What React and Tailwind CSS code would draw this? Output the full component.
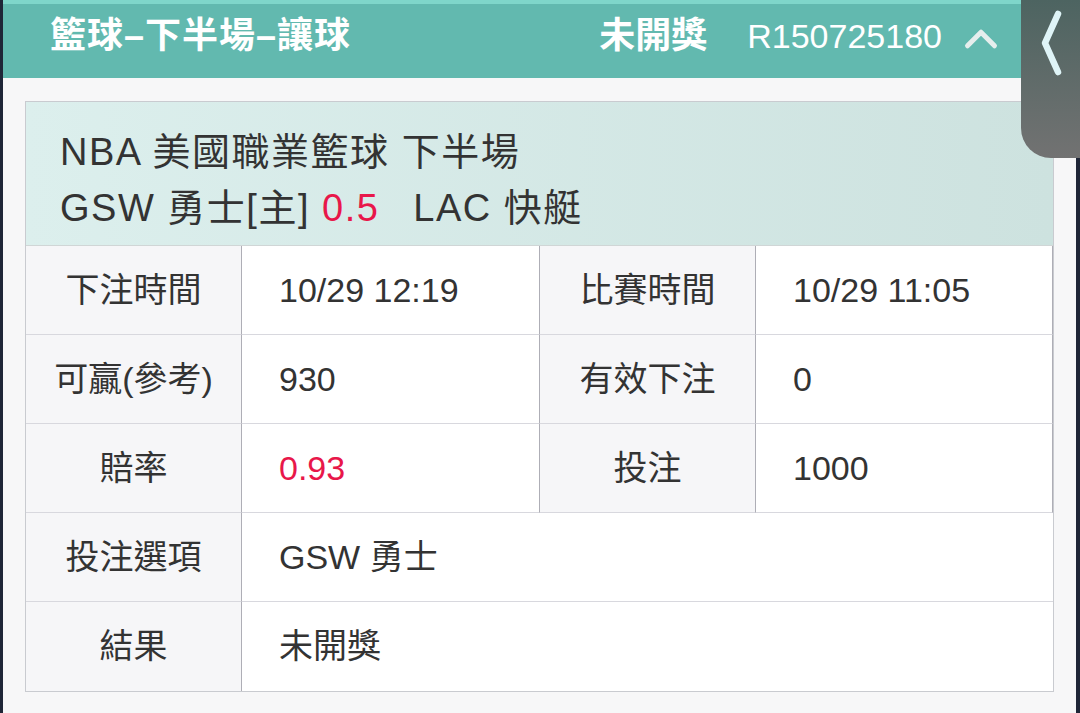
import { ChevronUp } from "lucide-react";

const font = { fontFamily: '"Liberation Sans", "Noto Sans CJK TC", sans-serif' };

function Label({ children }) {
	return (
		<div className="flex items-center justify-center bg-[#f6f6f8] border-r border-[#aeaeb6] text-[34px] text-[#333]">
			{children}
		</div>
	);
}

function Value({ children, red, span }) {
	return (
		<div
			className={`flex items-center pl-[37px] bg-white text-[34px] ${red ? "text-[#e8174a]" : "text-[#333]"} ${span ? "col-span-3" : "border-r border-[#aeaeb6]"}`}
		>
			{children}
		</div>
	);
}

export default function App() {
	return (
		<div className="w-[1080px] h-[713px] bg-[#1f2637] overflow-hidden relative" style={font}>
			<div className="ml-[3px] mr-[4px] h-full bg-[#f7f7f8] flex flex-col">
				{/* 頭部 */}
				<div className="h-[4px] bg-[#7fd6ca]" />
				<div className="h-[74px] bg-[#62b9af] flex items-center pl-[47px] pr-[68px] pb-[10px] text-white">
					<div className="text-[36px] font-bold tracking-[1px]">籃球–下半場–讓球</div>
					<div className="ml-auto text-[36px] font-bold">未開獎</div>
					<div className="ml-[40px] text-[34px]">R150725180</div>
					<ChevronUp className="ml-[12px] mt-[6px] w-[54px] h-[54px] text-[#e6eeed]" strokeWidth={2.2} />
				</div>

				{/* 卡片 */}
				<div className="mt-[23px] ml-[22px] w-[1029px] border border-[#c9cbd0] flex flex-col">
					<div className="h-[144px] bg-gradient-to-r from-[#dcefed] to-[#cde2df] border-b border-[#d0d6d6] pl-[34px] pt-[12px] flex flex-col justify-center text-[38px] tracking-[1.5px] text-[#333] leading-[56px]">
						<div>NBA 美國職業籃球 下半場</div>
						<div>
							GSW 勇士[主] <span className="text-[#e8174a]">0.5</span>
							<span className="ml-[34px]">LAC 快艇</span>
						</div>
					</div>
					<div className="grid grid-cols-[216px_298px_216px_1fr] auto-rows-[89px] [&>div]:border-b [&>div]:border-b-[#d8d8de] [&>div:nth-last-child(-n+2)]:border-b-0">
						<Label>下注時間</Label>
						<Value>10/29 12:19</Value>
						<Label>比賽時間</Label>
						<Value>10/29 11:05</Value>
						<Label>可贏(參考)</Label>
						<Value>930</Value>
						<Label>有效下注</Label>
						<Value>0</Value>
						<Label>賠率</Label>
						<Value red>0.93</Value>
						<Label>投注</Label>
						<Value>1000</Value>
						<Label>投注選項</Label>
						<Value span>GSW 勇士</Value>
						<Label>結果</Label>
						<Value span>未開獎</Value>
					</div>
				</div>
			</div>

			{/* 側邊標籤 */}
			<div className="absolute top-0 right-0 w-[59px] h-[158px] rounded-bl-[30px] bg-gradient-to-b from-[#4d6461] to-[#727272] flex justify-center pt-[9px]">
				<svg width="26" height="68" viewBox="0 0 26 68" fill="none">
					<path d="M20 5 L7 34 L20 63" stroke="#dff4f7" strokeWidth="6.5" strokeLinecap="round" strokeLinejoin="round" />
				</svg>
			</div>
		</div>
	);
}
